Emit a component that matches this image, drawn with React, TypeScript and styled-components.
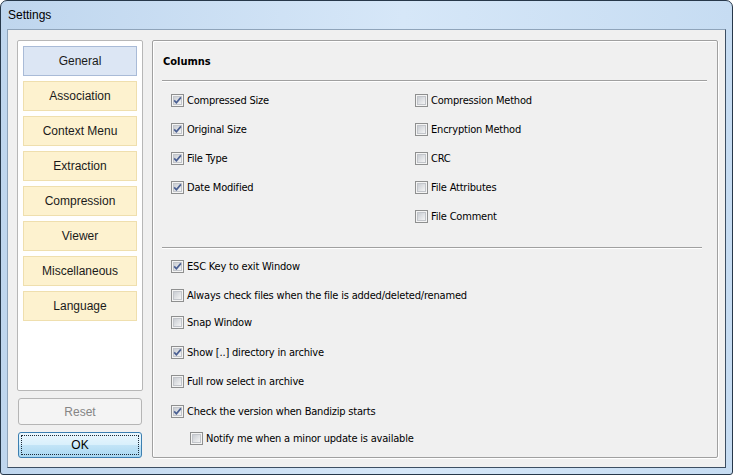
import styled, { createGlobalStyle } from 'styled-components';

const GlobalStyle = createGlobalStyle`
    html, body {
        margin: 0;
        padding: 0;
        background: #ffffff;
    }
    body {
        font-family: "Liberation Sans", Arial, sans-serif;
        color: #000;
    }
`;

const NAV_ITEMS = ['General', 'Association', 'Context Menu', 'Extraction', 'Compression', 'Viewer', 'Miscellaneous', 'Language'];

const LEFT_COLUMNS = [
    { label: 'Compressed Size', checked: true },
    { label: 'Original Size', checked: true },
    { label: 'File Type', checked: true },
    { label: 'Date Modified', checked: true },
];

const RIGHT_COLUMNS = [
    { label: 'Compression Method', checked: false },
    { label: 'Encryption Method', checked: false },
    { label: 'CRC', checked: false },
    { label: 'File Attributes', checked: false },
    { label: 'File Comment', checked: false },
];

const OPTIONS = [
    { label: 'ESC Key to exit Window', checked: true, top: 0, indent: 0 },
    { label: 'Always check files when the file is added/deleted/renamed', checked: false, top: 0, indent: 0 },
    { label: 'Snap Window', checked: false, top: -2, indent: 0 },
    { label: 'Show [..] directory in archive', checked: true, top: 1, indent: 0 },
    { label: 'Full row select in archive', checked: false, top: 0, indent: 0 },
    { label: 'Check the version when Bandizip starts', checked: true, top: 1, indent: 0 },
    { label: 'Notify me when a minor update is available', checked: false, top: -2, indent: 19 },
];

const App = () => {
    return (
        <>
            <GlobalStyle />
            <Window>
                <TitleBar>Settings</TitleBar>
                <Client>
                    <Sidebar>
                        <NavList>
                            {NAV_ITEMS.map((item, i) => (
                                <NavButton key={item} $active={i === 0}>
                                    {item}
                                </NavButton>
                            ))}
                        </NavList>
                        <PushButton type='button' disabled>
                            Reset
                        </PushButton>
                        <DefaultButton type='button'>
                            <FocusRing>OK</FocusRing>
                        </DefaultButton>
                    </Sidebar>
                    <Panel>
                        <GroupTitle>Columns</GroupTitle>
                        <Separator $right={10} />
                        <ColumnsGrid>
                            <Column>
                                {LEFT_COLUMNS.map((c) => (
                                    <CheckRow key={c.label} {...c} />
                                ))}
                            </Column>
                            <Column>
                                {RIGHT_COLUMNS.map((c) => (
                                    <CheckRow key={c.label} {...c} />
                                ))}
                            </Column>
                        </ColumnsGrid>
                        <Separator $right={15} $top={16} />
                        <OptionList>
                            {OPTIONS.map((o) => (
                                <CheckRow key={o.label} label={o.label} checked={o.checked} top={o.top} indent={o.indent} />
                            ))}
                        </OptionList>
                    </Panel>
                </Client>
            </Window>
        </>
    );
};

export default App;

const Window = styled.div`
    width: 733px;
    height: 475px;
    box-sizing: border-box;
    border: 1px solid #27384a;
    border-radius: 7px 7px 3px 3px;
    background: linear-gradient(to right, #bfd6ee 0%, #d6e7f8 55%, #c6dcf2 100%);
    padding: 0 6px 6px;
    display: flex;
    flex-direction: column;
`;

const TitleBar = styled.div`
    height: 28px;
    line-height: 28px;
    padding-left: 1px;
    font-size: 12px;
    color: #000;
`;

const Client = styled.div`
    flex: 1;
    border: 1px solid #8fa4ba;
    border-right-color: #3c4e62;
    border-bottom-color: #3c4e62;
    background: #f0f0f0;
    padding: 10px 0 0 9px;
    display: flex;
    gap: 9px;
    align-items: flex-start;
`;

const Sidebar = styled.div`
    width: 126px;
    display: flex;
    flex-direction: column;
`;

const NavList = styled.div`
    height: 351px;
    box-sizing: border-box;
    border: 1px solid #b7b7b7;
    border-radius: 2px;
    background: #ffffff;
    padding: 5px;
    display: flex;
    flex-direction: column;
    gap: 5px;
`;

const NavButton = styled.div<{ $active?: boolean }>`
    height: 30px;
    box-sizing: border-box;
    border: 1px solid ${(p) => (p.$active ? '#a9bbd7' : '#efdfae')};
    background: ${(p) => (p.$active ? '#dce6f4' : '#fdf2cf')};
    display: flex;
    align-items: center;
    justify-content: center;
    font-size: 12px;
    color: #1a1a1a;
`;

const PushButton = styled.button`
    margin: 7px 1px 0;
    height: 27px;
    box-sizing: border-box;
    border: 1px solid #b5b5b5;
    border-radius: 3px;
    background: #f4f4f4;
    font-family: "Liberation Sans", Arial, sans-serif;
    font-size: 12px;
    color: #858585;
    padding: 0;
`;

const DefaultButton = styled.button`
    margin: 7px 1px 0;
    height: 26px;
    box-sizing: border-box;
    border: 1px solid #3c7fb1;
    border-radius: 3px;
    background: linear-gradient(to bottom, #eaf6fd 0%, #d9f0fc 48%, #c2e4f7 52%, #a9d8f2 100%);
    font-family: "Liberation Sans", Arial, sans-serif;
    font-size: 12px;
    color: #000;
    padding: 2px;
    display: flex;
`;

const FocusRing = styled.span`
    flex: 1;
    border: 1px dotted #1c2a38;
    display: flex;
    align-items: center;
    justify-content: center;
`;

const Panel = styled.div`
    width: 566px;
    height: 418px;
    box-sizing: border-box;
    border: 1px solid #a0a0a0;
    border-radius: 2px;
    box-shadow: inset 1px 1px 0 #ffffff, 1px 1px 0 #ffffff;
    padding-left: 9px;
`;

const GroupTitle = styled.div`
    margin: 14px 0 0 1px;
    height: 13px;
    line-height: 13px;
    font-family: "DejaVu Sans Condensed", "DejaVu Sans", sans-serif;
    font-stretch: condensed;
    font-weight: bold;
    font-size: 11px;
`;

const Separator = styled.div<{ $right: number; $top?: number }>`
    margin-top: ${(p) => p.$top ?? 12}px;
    margin-right: ${(p) => p.$right}px;
    height: 1px;
    background: #a0a0a0;
    border-bottom: 1px solid #ffffff;
`;

const ColumnsGrid = styled.div`
    margin: 4px 0 0 9px;
    display: grid;
    grid-template-columns: 244px 1fr;
`;

const Column = styled.div`
    display: flex;
    flex-direction: column;
`;

const OptionList = styled.div`
    margin: 3px 0 0 9px;
    display: flex;
    flex-direction: column;
`;

// ---------------------------------------------------------------- //

interface ICheckRowProps {
    label: string;
    checked: boolean;
    top?: number;
    indent?: number;
}

const CheckRow = ({ label, checked, top = 0, indent = 0 }: ICheckRowProps) => {
    return (
        <Row $top={top} $indent={indent}>
            <CheckBox checked={checked} />
            <Label>{label}</Label>
        </Row>
    );
};

const Row = styled.div<{ $top: number; $indent: number }>`
    height: 29px;
    margin-top: ${(p) => p.$top}px;
    padding-left: ${(p) => p.$indent}px;
    display: flex;
    align-items: center;
    gap: 3px;
`;

const Label = styled.span`
    font-family: "DejaVu Sans Condensed", "DejaVu Sans", sans-serif;
    font-stretch: condensed;
    font-size: 11px;
    letter-spacing: -0.2px;
    color: #000;
    white-space: nowrap;
`;

const CheckBox = ({ checked }: { checked: boolean }) => (
    <svg width='13' height='13' viewBox='0 0 13 13' style={{ flex: 'none' }}>
        <defs>
            <linearGradient id='cbfill' x1='0' y1='0' x2='1' y2='1'>
                <stop offset='0' stopColor='#c6cad0' />
                <stop offset='1' stopColor='#f7f7f7' />
            </linearGradient>
        </defs>
        <rect x='0.5' y='0.5' width='12' height='12' fill='#f4f4f4' stroke='#8e8f8f' />
        <rect x='2.5' y='2.5' width='8' height='8' fill='url(#cbfill)' stroke='#c2c5ca' />
        {checked && <path d='M3.2 6.4 L5.4 8.8 L9.9 3.4' fill='none' stroke='#4a5f92' strokeWidth='1.7' />}
    </svg>
);
